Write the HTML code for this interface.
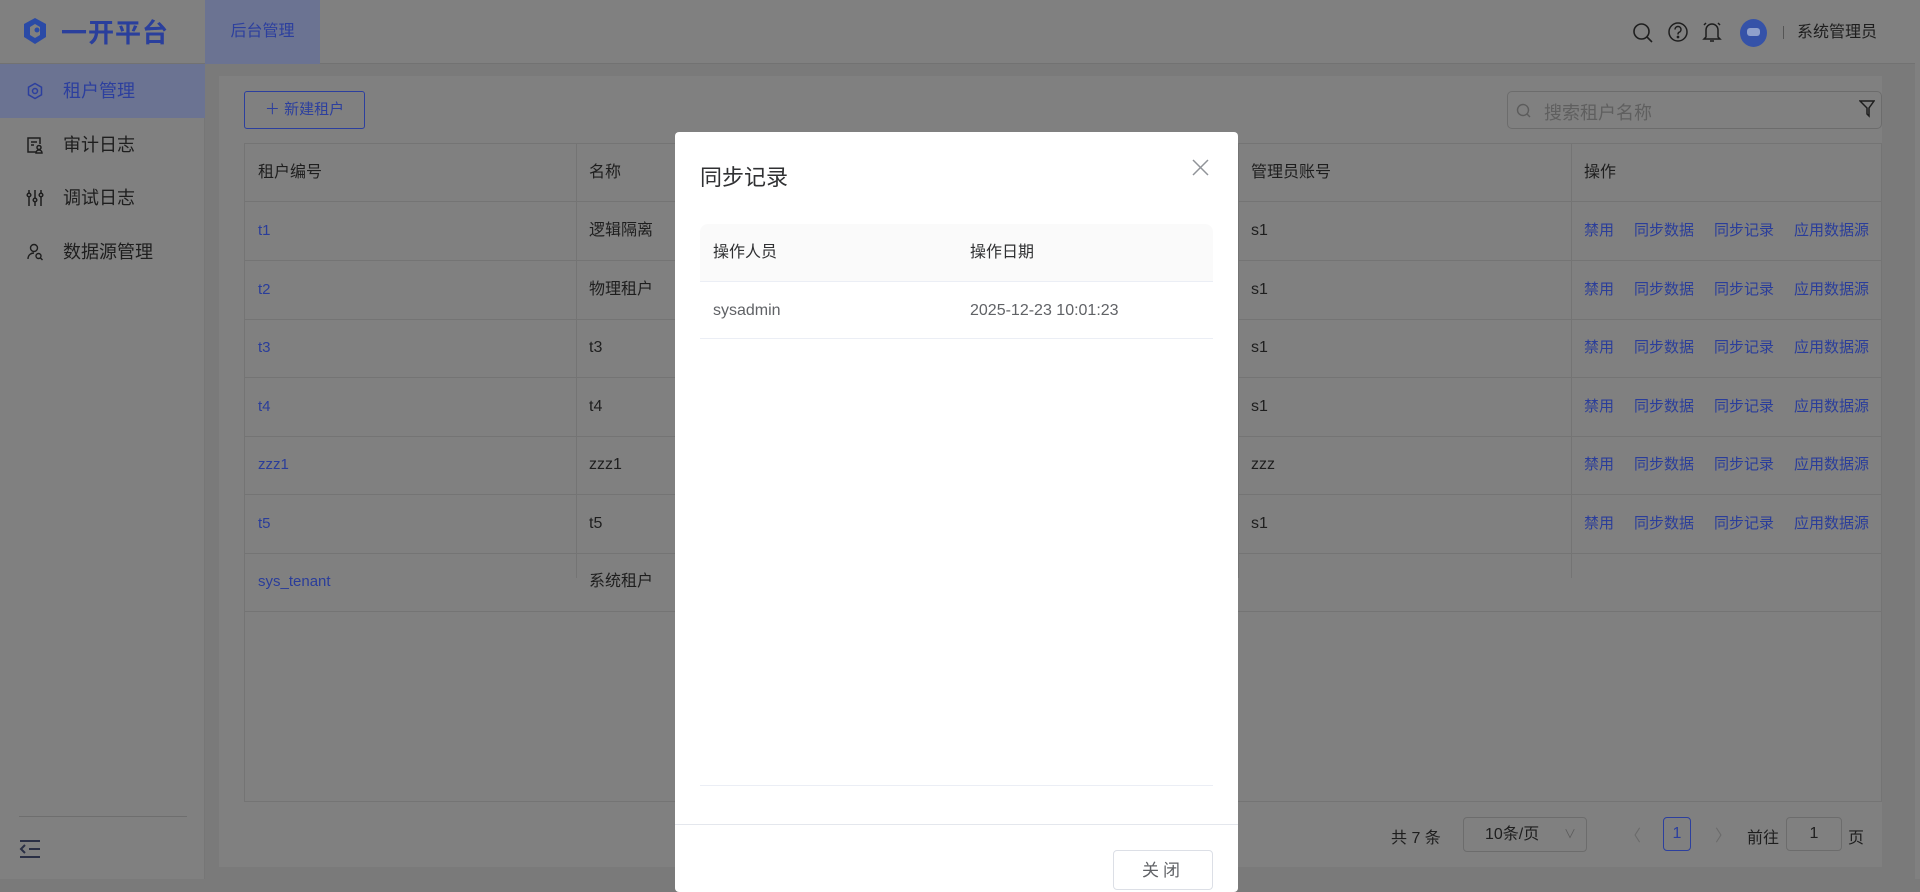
<!DOCTYPE html>
<html><head><meta charset="utf-8"><style>
*{box-sizing:border-box;margin:0;padding:0}
body{width:1920px;height:879px;overflow:hidden;position:relative;background:#7a7a7a;font-family:"Liberation Sans","Noto Sans CJK SC",sans-serif;color:#1e1e1e}
.abs{position:absolute}
.hdr{left:0;top:0;width:1920px;height:64px;background:#808080;border-bottom:1px solid #727272}
.side{left:0;top:64px;width:205px;height:815px;background:#808080;border-right:1px solid #767676}
.mi{position:absolute;left:0;width:205px;height:54px;font-size:18px;line-height:54px;padding-left:63px;color:#1e1e1e}
.mi svg{position:absolute;left:26px;top:18px}
.card{left:219px;top:76px;width:1663px;height:791px;background:#808080}
.link{color:#2a3d9a}
.tbl{left:244px;top:143px;width:1638px;height:659px;border:1px solid #747474}
.row{position:absolute;left:0;width:1636px;height:59px;border-bottom:1px solid #747474;font-size:16px}
.row div{position:absolute;top:0;line-height:58px}
.vl{position:absolute;top:0;width:1px;height:434px;background:#747474}
.ops span{margin-right:20px;font-size:15px}
.modal{left:675px;top:132px;width:563px;height:760px;background:#fff;border-radius:4px}
</style></head><body>
<div class="abs hdr">
 <svg class="abs" style="left:22px;top:17px" width="26" height="28" viewBox="0 0 26 28"><path d="M13 1 L24 7 L24 20 L13 27 L2 20 L2 7Z" fill="#2a4aa6"/><path d="M13 7 L18 10 L18 18 L13 21 L8 18 L8 10Z" fill="#808080"/><circle cx="15" cy="13" r="2.5" fill="#2a4aa6"/></svg>
 <div class="abs" style="left:61px;top:13px;font-size:26px;font-weight:bold;color:#2a3f9c;letter-spacing:1px">一开平台</div>
 <div class="abs" style="left:205px;top:0;width:115px;height:64px;background:#6b7392;color:#2c3f9e;font-size:16px;line-height:64px;text-align:center">后台管理</div>
 <svg class="abs" style="left:1632px;top:22px" width="22" height="22" viewBox="0 0 22 22" fill="none" stroke="#1e1e1e" stroke-width="1.6"><circle cx="9.5" cy="9.5" r="7.5"/><path d="M15 15l5 5"/></svg>
 <svg class="abs" style="left:1667px;top:21px" width="22" height="22" viewBox="0 0 22 22" fill="none" stroke="#1e1e1e" stroke-width="1.5"><circle cx="11" cy="11" r="9"/><path d="M8 8.5a3 3 0 1 1 4 2.8c-1 .4-1 1-1 2.2"/><circle cx="11" cy="16" r=".6" fill="#1e1e1e"/></svg>
 <svg class="abs" style="left:1701px;top:20px" width="22" height="24" viewBox="0 0 22 24" fill="none" stroke="#1e1e1e" stroke-width="1.5"><path d="M5 17V10a6 6 0 0 1 12 0v7l2 2H3z"/><path d="M9 21h4"/><path d="M3 5l2-2M19 5l-2-2"/></svg>
 <div class="abs" style="left:1740px;top:19px;width:27px;height:28px;border-radius:50%;background:#3552a8"><div class="abs" style="left:7px;top:9px;width:13px;height:8px;border-radius:3px;background:#8fa0cc"></div></div>
 <div class="abs" style="left:1783px;top:26px;width:1px;height:13px;background:#555"></div>
 <div class="abs" style="left:1797px;top:23px;font-size:16px;line-height:20px">系统管理员</div>
</div>
<div class="abs side">
 <div class="mi" style="top:0;background:#6b7392;color:#2c3f9e"><svg width="18" height="18" viewBox="0 0 18 18" fill="none" stroke="#2c3f9e" stroke-width="1.5"><path d="M9 1.5l6.5 3.7v7.6L9 16.5l-6.5-3.7V5.2z"/><circle cx="9" cy="9" r="2.5"/></svg>租户管理</div>
 <div class="mi" style="top:54px"><svg width="18" height="18" viewBox="0 0 18 18" fill="none" stroke="#1e1e1e" stroke-width="1.5"><path d="M10 16H2V2h12v6"/><path d="M5 6h6M5 9h3"/><circle cx="13" cy="11.5" r="2"/><path d="M10 17c0-2 1.5-3 3-3s3 1 3 3z"/></svg>审计日志</div>
 <div class="mi" style="top:107px"><svg width="18" height="18" viewBox="0 0 18 18" fill="none" stroke="#1e1e1e" stroke-width="1.5"><path d="M3 1v16M9 1v16M15 1v16"/><circle cx="3" cy="6" r="1.8" fill="#808080"/><circle cx="9" cy="11" r="1.8" fill="#808080"/><circle cx="15" cy="6" r="1.8" fill="#808080"/></svg>调试日志</div>
 <div class="mi" style="top:161px"><svg width="18" height="18" viewBox="0 0 18 18" fill="none" stroke="#1e1e1e" stroke-width="1.4"><circle cx="8" cy="5" r="3.5"/><path d="M2 16c0-4 3-6 6-6"/><circle cx="12.5" cy="13" r="2.5"/><path d="M14.5 15l2 2"/></svg>数据源管理</div>
 <div class="abs" style="left:19px;top:752px;width:168px;height:1px;background:#6e6e6e"></div>
 <svg class="abs" style="left:19px;top:775px" width="22" height="20" viewBox="0 0 22 20" fill="none" stroke="#2a2f45" stroke-width="2"><path d="M1 2h20M10 10h11M1 18h20M6 6l-4 4 4 4"/></svg>
</div>
<div class="abs card"></div>
<div class="abs" style="left:244px;top:91px;width:121px;height:38px;border:1px solid #2c3f9e;border-radius:3px;color:#2c3f9e;font-size:15px;line-height:36px;text-align:center">＋ 新建租户</div>
<div class="abs" style="left:1507px;top:91px;width:375px;height:38px;border:1px solid #6c6c6c;border-radius:5px">
 <svg class="abs" style="left:8px;top:11px" width="16" height="16" viewBox="0 0 16 16" fill="none" stroke="#5c5c5c" stroke-width="1.4"><circle cx="7" cy="7" r="5.5"/><path d="M11 11l3 3"/></svg>
 <div class="abs" style="left:36px;top:7px;font-size:18px;color:#5f5f5f">搜索租户名称</div>
 <svg class="abs" style="left:351px;top:7px" width="16" height="20" viewBox="0 0 16 20" fill="none" stroke="#1e1e1e" stroke-width="1.5"><path d="M1 2h14l-5 7v8l-2-2V9z"/></svg>
</div>
<div class="abs tbl">
 <div class="row" style="top:0;height:58px"><div style="left:13px">租户编号</div><div style="left:344px">名称</div><div style="left:1006px">管理员账号</div><div style="left:1339px">操作</div></div>
 <div class="vl" style="left:331px"></div><div class="vl" style="left:993px"></div><div class="vl" style="left:1326px"></div>
 <div class="row" style="top:58px"><div class="link" style="left:13px;font-size:15px">t1</div><div style="left:344px">逻辑隔离</div><div style="left:1006px">s1</div><div class="ops link" style="left:1339px"><span>禁用</span><span>同步数据</span><span>同步记录</span><span style="margin:0">应用数据源</span></div></div>
 <div class="row" style="top:117px"><div class="link" style="left:13px;font-size:15px">t2</div><div style="left:344px">物理租户</div><div style="left:1006px">s1</div><div class="ops link" style="left:1339px"><span>禁用</span><span>同步数据</span><span>同步记录</span><span style="margin:0">应用数据源</span></div></div>
 <div class="row" style="top:175px"><div class="link" style="left:13px;font-size:15px">t3</div><div style="left:344px">t3</div><div style="left:1006px">s1</div><div class="ops link" style="left:1339px"><span>禁用</span><span>同步数据</span><span>同步记录</span><span style="margin:0">应用数据源</span></div></div>
 <div class="row" style="top:234px"><div class="link" style="left:13px;font-size:15px">t4</div><div style="left:344px">t4</div><div style="left:1006px">s1</div><div class="ops link" style="left:1339px"><span>禁用</span><span>同步数据</span><span>同步记录</span><span style="margin:0">应用数据源</span></div></div>
 <div class="row" style="top:292px"><div class="link" style="left:13px;font-size:15px">zzz1</div><div style="left:344px">zzz1</div><div style="left:1006px">zzz</div><div class="ops link" style="left:1339px"><span>禁用</span><span>同步数据</span><span>同步记录</span><span style="margin:0">应用数据源</span></div></div>
 <div class="row" style="top:351px"><div class="link" style="left:13px;font-size:15px">t5</div><div style="left:344px">t5</div><div style="left:1006px">s1</div><div class="ops link" style="left:1339px"><span>禁用</span><span>同步数据</span><span>同步记录</span><span style="margin:0">应用数据源</span></div></div>
 <div class="row" style="top:409px"><div class="link" style="left:13px;font-size:15px">sys_tenant</div><div style="left:344px">系统租户</div></div>
</div>
<div class="abs" style="left:1391px;top:824px;font-size:16px">共 7 条</div>
<div class="abs" style="left:1463px;top:817px;width:124px;height:35px;border:1px solid #6c6c6c;border-radius:4px;font-size:16px;line-height:33px;padding-left:21px">10条/页<span style="position:absolute;right:10px;color:#5c5c5c;font-size:12px">∨</span></div>
<div class="abs" style="left:1625px;top:822px;color:#6a6a6a;font-size:16px">〈</div>
<div class="abs" style="left:1663px;top:817px;width:28px;height:34px;border:1px solid #2c3f9e;border-radius:4px;color:#2c3f9e;font-size:16px;line-height:32px;text-align:center">1</div>
<div class="abs" style="left:1715px;top:822px;color:#6a6a6a;font-size:16px">〉</div>
<div class="abs" style="left:1747px;top:824px;font-size:16px">前往</div>
<div class="abs" style="left:1786px;top:817px;width:56px;height:34px;border:1px solid #6c6c6c;border-radius:4px;font-size:16px;line-height:32px;text-align:center">1</div>
<div class="abs" style="left:1848px;top:824px;font-size:16px">页</div>
<div class="abs" style="left:1915px;top:0;width:5px;height:879px;background:#808080"></div>

<div class="abs modal">
 <div class="abs" style="left:25px;top:28px;font-size:22px;color:#303133">同步记录</div>
 <svg class="abs" style="left:517px;top:27px" width="17" height="17" viewBox="0 0 17 17" stroke="#909399" stroke-width="1.5"><path d="M1 1l15 15M16 1L1 16"/></svg>
 <div class="abs" style="left:25px;top:92px;width:513px;height:58px;background:#fafafa;border-radius:8px 8px 0 0;border-bottom:1px solid #ebeef5;font-size:16px;line-height:58px;color:#303133"><span class="abs" style="left:13px">操作人员</span><span class="abs" style="left:270px">操作日期</span></div>
 <div class="abs" style="left:25px;top:150px;width:513px;height:57px;border-bottom:1px solid #ebeef5;font-size:16px;line-height:57px;color:#606266"><span class="abs" style="left:13px">sysadmin</span><span class="abs" style="left:270px">2025-12-23 10:01:23</span></div>
 <div class="abs" style="left:25px;top:653px;width:513px;height:1px;background:#ebeef5"></div>
 <div class="abs" style="left:0;top:692px;width:563px;height:1px;background:#e4e7ed"></div>
 <div class="abs" style="left:438px;top:718px;width:100px;height:40px;border:1px solid #dcdfe6;border-radius:4px;font-size:17px;line-height:40px;text-align:center;color:#606266;letter-spacing:4px">关闭</div>
</div>
</body></html>
